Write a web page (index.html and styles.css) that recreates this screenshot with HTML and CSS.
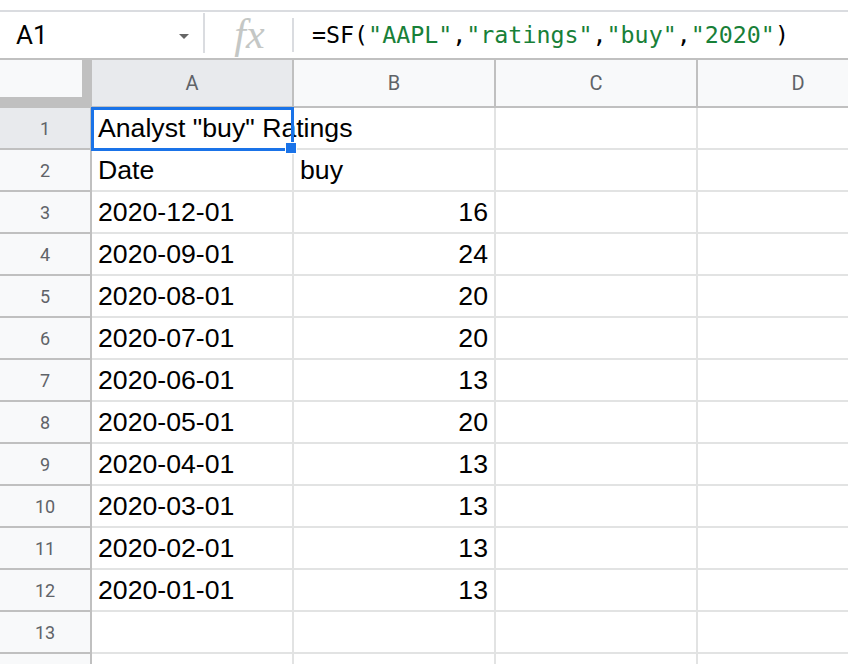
FILE: index.html
```html
<!DOCTYPE html>
<html lang="en">
<head>
  <meta charset="UTF-8">
  <title>Sheet</title>
  <link rel="stylesheet" href="styles.css">
</head>
<body>
  <div class="topline"></div>
  <div class="formula-bar">
    <div class="name-box">
      <span class="name">A1</span>
      <span class="caret"></span>
    </div>
    <div class="sep sep-tall"></div>
    <div class="fx">fx</div>
    <div class="sep sep-short"></div>
    <div class="formula">=SF(<span class="str">"AAPL"</span>,<span class="str">"ratings"</span>,<span class="str">"buy"</span>,<span class="str">"2020"</span>)</div>
  </div>

  <div class="sheet">
    <div class="corner"><div class="corner-in"></div></div>
    <div class="col-head selected">A</div>
    <div class="col-head">B</div>
    <div class="col-head">C</div>
    <div class="col-head">D</div>

    <div class="row-head selected">1</div>
    <div class="cell overflow">Analyst "buy" Ratings</div>
    <div class="cell"></div>
    <div class="cell"></div>
    <div class="cell"></div>

    <div class="row-head">2</div>
    <div class="cell">Date</div>
    <div class="cell">buy</div>
    <div class="cell"></div>
    <div class="cell"></div>

    <div class="row-head">3</div>
    <div class="cell">2020-12-01</div>
    <div class="cell num">16</div>
    <div class="cell"></div>
    <div class="cell"></div>

    <div class="row-head">4</div>
    <div class="cell">2020-09-01</div>
    <div class="cell num">24</div>
    <div class="cell"></div>
    <div class="cell"></div>

    <div class="row-head">5</div>
    <div class="cell">2020-08-01</div>
    <div class="cell num">20</div>
    <div class="cell"></div>
    <div class="cell"></div>

    <div class="row-head">6</div>
    <div class="cell">2020-07-01</div>
    <div class="cell num">20</div>
    <div class="cell"></div>
    <div class="cell"></div>

    <div class="row-head">7</div>
    <div class="cell">2020-06-01</div>
    <div class="cell num">13</div>
    <div class="cell"></div>
    <div class="cell"></div>

    <div class="row-head">8</div>
    <div class="cell">2020-05-01</div>
    <div class="cell num">20</div>
    <div class="cell"></div>
    <div class="cell"></div>

    <div class="row-head">9</div>
    <div class="cell">2020-04-01</div>
    <div class="cell num">13</div>
    <div class="cell"></div>
    <div class="cell"></div>

    <div class="row-head">10</div>
    <div class="cell">2020-03-01</div>
    <div class="cell num">13</div>
    <div class="cell"></div>
    <div class="cell"></div>

    <div class="row-head">11</div>
    <div class="cell">2020-02-01</div>
    <div class="cell num">13</div>
    <div class="cell"></div>
    <div class="cell"></div>

    <div class="row-head">12</div>
    <div class="cell">2020-01-01</div>
    <div class="cell num">13</div>
    <div class="cell"></div>
    <div class="cell"></div>

    <div class="row-head">13</div>
    <div class="cell"></div>
    <div class="cell"></div>
    <div class="cell"></div>
    <div class="cell"></div>

    <div class="row-head"></div>
    <div class="cell"></div>
    <div class="cell"></div>
    <div class="cell"></div>
    <div class="cell"></div>

    <!-- selection over A1 -->
    <div class="selection"></div>
    <div class="handle"></div>
  </div>
</body>
</html>
```

FILE: styles.css
```css
* {
  margin: 0;
  padding: 0;
  box-sizing: border-box;
}

body {
  background-color: white;
  width: 848px;
  height: 664px;
  overflow: hidden;
  font-family: "Liberation Sans", Arial, sans-serif;
}

.topline {
  height: 12px;
  border-bottom: 2px solid #dadce0;
}

.formula-bar {
  display: flex;
  height: 48px;
  border-bottom: 2px solid #c0c0c0;
}

.name-box {
  width: 203px;
  display: flex;
  align-items: center;
  padding-left: 16px;
}

.name {
  font-family: Roboto, sans-serif;
  font-size: 26px;
  color: #000;
}

.caret {
  margin-left: auto;
  margin-right: 14px;
  margin-top: 2px;
  width: 0;
  height: 0;
  border-left: 5px solid transparent;
  border-right: 5px solid transparent;
  border-top: 5px solid #666;
}

.sep {
  width: 2px;
  background-color: #dadce0;
}

.sep-tall {
  height: 40px;
  margin-top: 1px;
}

.sep-short {
  height: 34px;
  margin-top: 6px;
}

.fx {
  width: 87px;
  padding-left: 2px;
  text-align: center;
  font-family: "Liberation Serif", serif;
  font-style: italic;
  font-size: 42px;
  line-height: 44px;
  color: #c4c7c5;
}

.formula {
  padding-left: 18px;
  padding-top: 1px;
  font-family: "DejaVu Sans Mono", monospace;
  font-size: 23.3px;
  line-height: 44px;
  color: #000;
  white-space: nowrap;
}

.formula .str {
  color: #188038;
}

.sheet {
  position: relative;
  height: 604px;
  overflow: hidden;
  display: grid;
  grid-template-columns: 92px repeat(4, 202px);
  grid-template-rows: 48px;
  grid-auto-rows: 42px;
}

.corner {
  background-color: #c0c0c0;
}

.corner-in {
  width: 82px;
  height: 37px;
  background-color: #f8f9fa;
}

.col-head {
  background-color: #f8f9fa;
  border-right: 2px solid #c0c0c0;
  border-bottom: 2px solid #c0c0c0;
  display: flex;
  align-items: center;
  justify-content: center;
  font-family: Roboto, sans-serif;
  font-size: 20px;
  color: #5f6368;
}

.row-head {
  background-color: #f8f9fa;
  border-right: 2px solid #c0c0c0;
  border-bottom: 2px solid #c0c0c0;
  display: flex;
  align-items: center;
  justify-content: center;
  font-family: Roboto, sans-serif;
  font-size: 18px;
  color: #5f6368;
}

.col-head.selected,
.row-head.selected {
  background-color: #e8eaed;
}

.cell {
  border-right: 2px solid #e2e3e3;
  border-bottom: 2px solid #e2e3e3;
  padding: 0 6px;
  font-size: 26.67px;
  line-height: 40px;
  color: #000;
  white-space: nowrap;
}

.cell.num {
  text-align: right;
}

.cell.overflow {
  overflow: visible;
}

.selection {
  position: absolute;
  left: 91px;
  top: 47px;
  width: 203px;
  height: 44px;
  border: 3px solid #1a73e8;
}

.handle {
  position: absolute;
  left: 285px;
  top: 82px;
  width: 12px;
  height: 12px;
  background-color: #1a73e8;
  border: 1px solid white;
}
```
